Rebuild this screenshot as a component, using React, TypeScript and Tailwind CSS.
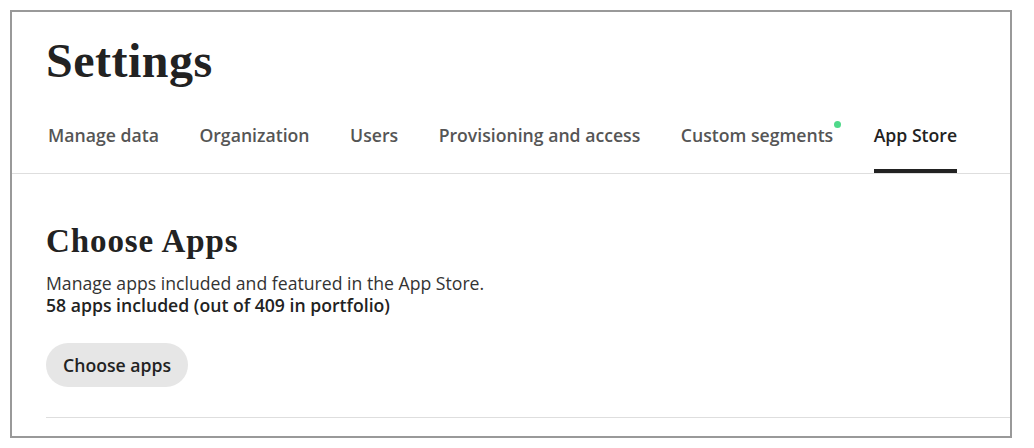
const tabs = [
  { label: "Manage data" },
  { label: "Organization" },
  { label: "Users" },
  { label: "Provisioning and access" },
  { label: "Custom segments", dot: true },
  { label: "App Store", active: true },
];

const sans = "font-['Open_Sans',sans-serif]";
const serif = "font-['Liberation_Serif',serif]";

export default function App() {
  return (
    <div className="h-[448px] w-[1034px] bg-white pl-[10px] pt-[10px]">
      <div className="flex h-[428px] w-[1002px] flex-col border-2 border-[#999]">
        <header className="border-b border-[#dedede] pl-[34px]">
          <h1
            className={`${serif} pt-[23px] text-[48px] font-bold leading-[52px] tracking-[0.5px] text-[#222]`}
          >
            Settings
          </h1>
          <nav className={`${sans} mt-[36px] flex gap-[40.5px] pl-[2px]`}>
            {tabs.map((tab) => (
              <div
                key={tab.label}
                className={`border-b-4 pb-[22px] text-[17.65px] font-semibold leading-[24px] ${
                  tab.active
                    ? "border-[#222] text-[#222]"
                    : "border-transparent text-[#555]"
                }`}
              >
                <span className="relative">
                  {tab.label}
                  {tab.dot && (
                    <span className="absolute -right-[8px] -top-[2px] h-[7px] w-[7px] rounded-full bg-[#4fd98a]" />
                  )}
                </span>
              </div>
            ))}
          </nav>
        </header>

        <section className="pl-[34px]">
          <h2
            className={`${serif} pt-[49px] text-[33px] font-bold leading-[36px] tracking-[0.9px] text-[#222]`}
          >
            Choose Apps
          </h2>
          <div
            className={`${sans} mt-[13px] text-[17.65px] leading-[22px] text-[#333]`}
          >
            <p>Manage apps included and featured in the App Store.</p>
            <p className="font-semibold text-[#222]">
              58 apps included (out of 409 in portfolio)
            </p>
          </div>
          <button
            className={`${sans} mt-[27px] h-[44px] rounded-full bg-[#e6e6e6] px-[17px] text-[17.65px] font-semibold text-[#222]`}
          >
            Choose apps
          </button>
          <div className="mt-[30px] border-t border-[#dedede]" />
        </section>
      </div>
    </div>
  );
}
